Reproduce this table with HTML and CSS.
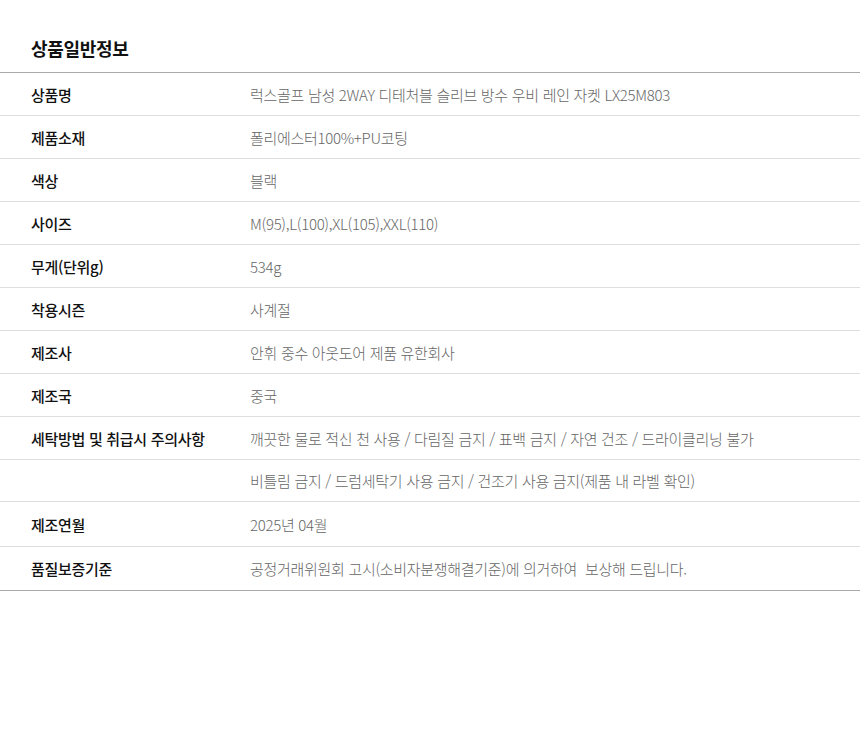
FILE: index.html
```html
<!DOCTYPE html>
<html lang="ko">
<head>
<meta charset="utf-8">
<link rel="stylesheet" href="styles.css">
</head>
<body>
<div class="wrap">
  <h2 class="title">상품일반정보</h2>
  <table class="info">
    <tbody>
      <tr><th>상품명</th><td>럭스골프 남성 2WAY 디테처블 슬리브 방수 우비 레인 자켓 LX25M803</td></tr>
      <tr><th>제품소재</th><td>폴리에스터100%+PU코팅</td></tr>
      <tr><th>색상</th><td>블랙</td></tr>
      <tr><th>사이즈</th><td>M(95),L(100),XL(105),XXL(110)</td></tr>
      <tr><th>무게(단위g)</th><td>534g</td></tr>
      <tr><th>착용시즌</th><td>사계절</td></tr>
      <tr><th>제조사</th><td>안휘 중수 아웃도어 제품 유한회사</td></tr>
      <tr><th>제조국</th><td>중국</td></tr>
      <tr><th>세탁방법 및 취급시 주의사항</th><td>깨끗한 물로 적신 천 사용 / 다림질 금지 / 표백 금지 / 자연 건조 / 드라이클리닝 불가</td></tr>
      <tr class="h41"><th></th><td>비틀림 금지 / 드럼세탁기 사용 금지 / 건조기 사용 금지(제품 내 라벨 확인)</td></tr>
      <tr class="h44"><th>제조연월</th><td>2025년 04월</td></tr>
      <tr class="last"><th>품질보증기준</th><td>공정거래위원회 고시(소비자분쟁해결기준)에 의거하여&nbsp; 보상해 드립니다.</td></tr>
    </tbody>
  </table>
</div>
</body>
</html>
```

FILE: styles.css
```css
* { box-sizing: border-box; }
html, body { margin: 0; padding: 0; background: #fff; }
body {
  font-family: "Noto Sans CJK KR", "Noto Sans", sans-serif;
  color: #111;
}
.wrap { width: 860px; }
.title {
  margin: 0;
  padding: 36px 31px 0;
  height: 72px;
  font-size: 18px;
  line-height: 24px;
  letter-spacing: -0.3px;
  font-weight: 700;
  color: #111;
}
.info {
  width: 100%;
  border-collapse: collapse;
  border-top: 1px solid #a9a9a9;
  border-bottom: 1px solid #a9a9a9;
}
.info tr { height: 43px; border-bottom: 1px solid #dedede; }
.info tr.h41 { height: 42px; }
.info tr.h44 { height: 45px; }
.info tr.last { height: 44px; border-bottom: none; }
.info th {
  width: 250px;
  padding: 0 0 0 31px;
  text-align: left;
  font-size: 15px;
  letter-spacing: -0.3px;
  font-weight: 500;
  color: #111;
  vertical-align: middle;
  white-space: nowrap;
}
.info td {
  padding: 0;
  font-size: 15px;
  letter-spacing: -0.3px;
  font-weight: 300;
  color: #666;
  vertical-align: middle;
  white-space: nowrap;
}
```
